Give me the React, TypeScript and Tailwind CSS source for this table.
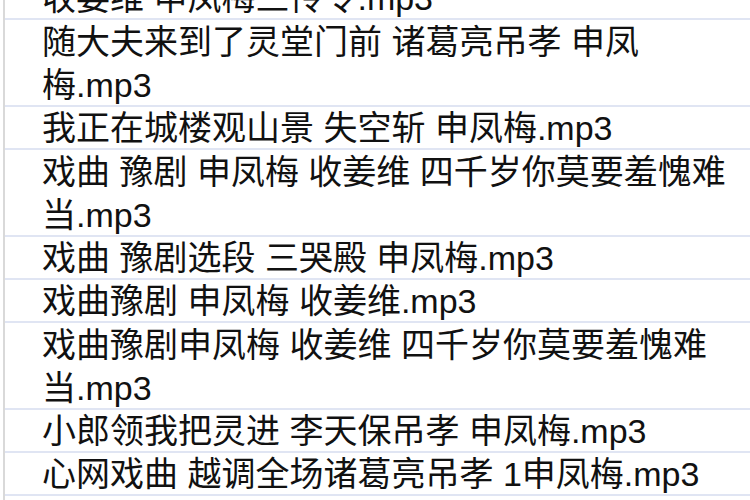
import React from "react";

// each cell: the lines as the sheet wraps them, and the row height in px
const rows: { lines: string[]; h: string }[] = [
  { lines: ["收姜维 申凤梅三传令.mp3"], h: "h-[44px]" },
  { lines: ["随大夫来到了灵堂门前 诸葛亮吊孝 申凤", "梅.mp3"], h: "h-[87px]" },
  { lines: ["我正在城楼观山景 失空斩 申凤梅.mp3"], h: "h-[43px]" },
  { lines: ["戏曲 豫剧 申凤梅 收姜维 四千岁你莫要羞愧难", "当.mp3"], h: "h-[87px]" },
  { lines: ["戏曲 豫剧选段 三哭殿 申凤梅.mp3"], h: "h-[43px]" },
  { lines: ["戏曲豫剧 申凤梅 收姜维.mp3"], h: "h-[43px]" },
  { lines: ["戏曲豫剧申凤梅 收姜维 四千岁你莫要羞愧难", "当.mp3"], h: "h-[87px]" },
  { lines: ["小郎领我把灵进 李天保吊孝 申凤梅.mp3"], h: "h-[43px]" },
  { lines: ["心网戏曲 越调全场诸葛亮吊孝 1申凤梅.mp3"], h: "h-[43px]" },
  { lines: [""], h: "h-[43px]" },
];

export default function App() {
  return (
    <div className="w-[750px] h-[500px] overflow-hidden bg-white flex">
      <div className="w-[3px] shrink-0" />
      <div className="flex-1 border-l-2 border-[#d9d9d9] -mt-[24px]">
        {rows.map((row, i) => (
          <div
            key={i}
            className={`${row.h} border-b-2 border-[#e0e5f3] pl-[37px] flex flex-col justify-end overflow-hidden text-[34px] leading-[43px] text-[#111] whitespace-nowrap`}
            style={{ fontFamily: '"Liberation Sans", "Noto Sans CJK SC", sans-serif' }}
          >
            <div className="-mb-[2px]">
              {row.lines.map((line, j) => (
                <div key={j}>{line}</div>
              ))}
            </div>
          </div>
        ))}
      </div>
    </div>
  );
}
